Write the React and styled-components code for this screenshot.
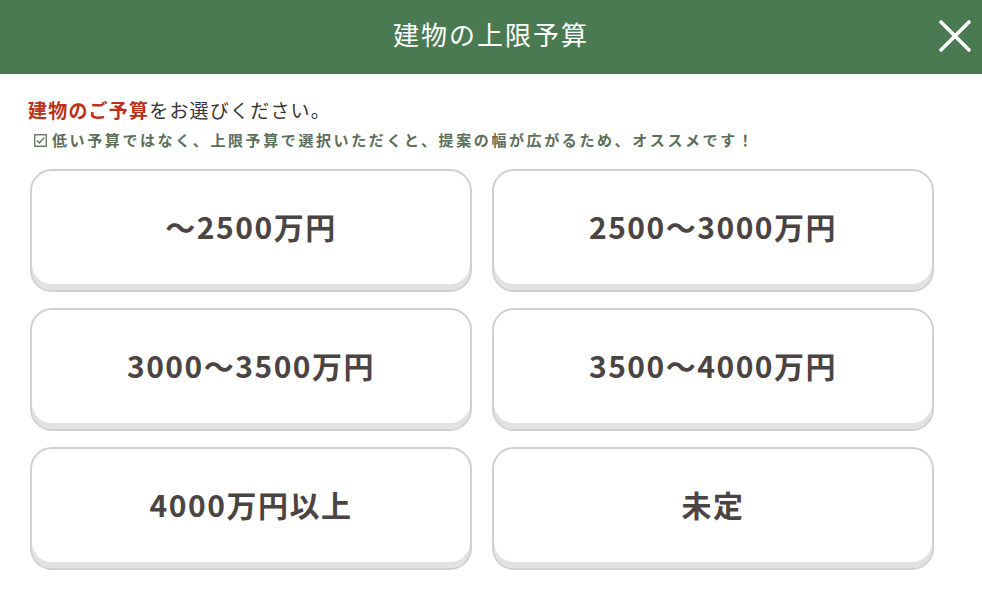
import React from 'react';
import styled, { createGlobalStyle } from 'styled-components';

const GlobalStyle = createGlobalStyle`
  html, body {
    margin: 0;
    padding: 0;
    background: #fff;
    font-family: "Noto Sans CJK JP", "Noto Sans", sans-serif;
  }
`;

const Modal = styled.div`
  width: 982px;
  height: 598px;
  background: #fff;
  overflow: hidden;
`;

const Header = styled.header`
  position: relative;
  height: 74px;
  background: #4a7a52;
  display: flex;
  align-items: center;
  justify-content: center;
`;

const Title = styled.h1`
  margin: 0;
  color: #fff;
  font-size: 26px;
  font-weight: 400;
  letter-spacing: 2px;
  line-height: 1;
  padding-bottom: 6px;
`;

const CloseButton = styled.button`
  position: absolute;
  top: 19px;
  right: 10px;
  width: 34px;
  height: 34px;
  padding: 0;
  border: none;
  background: transparent;
  cursor: pointer;
`;

const Body = styled.div`
  padding: 23px 48px 0 30px;
`;

const Lead = styled.p`
  margin: 0 0 0 -2px;
  font-size: 19px;
  line-height: 26px;
  letter-spacing: 1.2px;
  color: #333;
`;

const Accent = styled.strong`
  color: #b8321c;
  font-weight: 700;
`;

const Note = styled.p`
  margin: 6px 0 18px 4px;
  display: flex;
  align-items: center;
  gap: 5px;
  font-size: 15px;
  line-height: 22px;
  letter-spacing: 2.6px;
  font-weight: 700;
  color: #5d6e5b;
`;

const Grid = styled.div`
  display: grid;
  grid-template-columns: 1fr 1fr;
  column-gap: 20px;
  row-gap: 16px;
`;

const Choice = styled.button`
  height: 123px;
  box-sizing: border-box;
  border: 2px solid #d0d0d0;
  border-radius: 22px;
  background: #fff;
  box-shadow: inset 0 -6px 0 #e2e2e2;
  display: flex;
  align-items: center;
  justify-content: center;
  padding: 0 0 10px;
  font-family: inherit;
  font-size: 30px;
  letter-spacing: 1.5px;
  font-weight: 700;
  color: #4b4443;
  cursor: pointer;
`;

const options = [
  '～2500万円',
  '2500～3000万円',
  '3000～3500万円',
  '3500～4000万円',
  '4000万円以上',
  '未定',
];

const CheckIcon = () => (
  <svg width="13" height="13" viewBox="0 0 13 13" fill="none">
    <rect x="0.75" y="0.75" width="11.5" height="11.5" stroke="#5d6e5b" strokeWidth="1.3" />
    <path d="M3 6.5 L5.4 8.9 L10 3.8" stroke="#5d6e5b" strokeWidth="1.4" />
  </svg>
);

export default function App() {
  return (
    <Modal>
      <GlobalStyle />
      <Header>
        <Title>建物の上限予算</Title>
        <CloseButton aria-label="閉じる">
          <svg width="34" height="34" viewBox="0 0 34 34">
            <path d="M3 3 L31 31 M31 3 L3 31" stroke="#fff" strokeWidth="3.6" strokeLinecap="round" />
          </svg>
        </CloseButton>
      </Header>
      <Body>
        <Lead>
          <Accent>建物のご予算</Accent>をお選びください。
        </Lead>
        <Note>
          <CheckIcon />
          低い予算ではなく、上限予算で選択いただくと、提案の幅が広がるため、オススメです！
        </Note>
        <Grid>
          {options.map((o) => (
            <Choice key={o}>{o}</Choice>
          ))}
        </Grid>
      </Body>
    </Modal>
  );
}
